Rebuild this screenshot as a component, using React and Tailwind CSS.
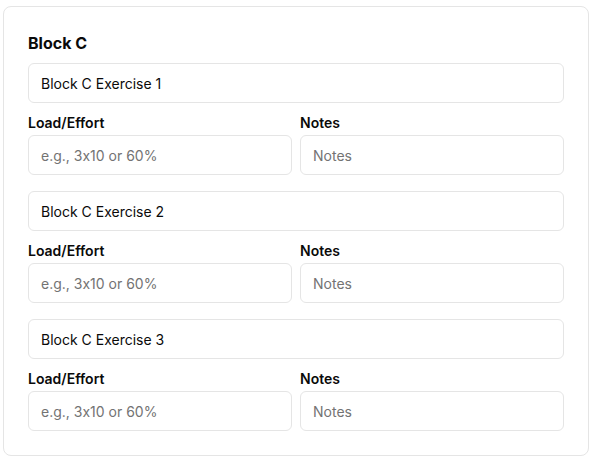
export default function App() {
  const exercises = [1, 2, 3];

  return (
    <div
      className="min-h-screen bg-white p-[3px] pt-[6px] [font-feature-settings:'calt'_0]"
      style={{ fontFamily: 'Inter, "Noto Sans", sans-serif' }}
    >
      <div className="w-[586px] rounded-lg border border-[#e5e5e5] bg-white p-6">
        <h3 className="text-base font-bold leading-6 text-[#0a0a0a]">Block C</h3>

        <div className="mt-2 space-y-4">
          {exercises.map((n) => (
            <div key={n}>
              <input
                type="text"
                defaultValue={`Block C Exercise ${n}`}
                className="h-10 w-full rounded-md border border-[#e5e5e5] bg-white px-3 text-sm text-[#0a0a0a] outline-none [font-feature-settings:'calt'_0]"
              />
              <div className="mt-2.5 grid grid-cols-2 gap-2">
                <div>
                  <label className="mb-0.5 block text-sm font-semibold leading-5 text-[#0a0a0a]">Load/Effort</label>
                  <input
                    type="text"
                    placeholder="e.g., 3x10 or 60%"
                    className="h-10 w-full rounded-md border border-[#e5e5e5] bg-white px-3 text-sm text-[#0a0a0a] outline-none placeholder:text-[#737373] [font-feature-settings:'calt'_0]"
                  />
                </div>
                <div>
                  <label className="mb-0.5 block text-sm font-semibold leading-5 text-[#0a0a0a]">Notes</label>
                  <input
                    type="text"
                    placeholder="Notes"
                    className="h-10 w-full rounded-md border border-[#e5e5e5] bg-white px-3 text-sm text-[#0a0a0a] outline-none placeholder:text-[#737373] [font-feature-settings:'calt'_0]"
                  />
                </div>
              </div>
            </div>
          ))}
        </div>
      </div>
    </div>
  );
}
